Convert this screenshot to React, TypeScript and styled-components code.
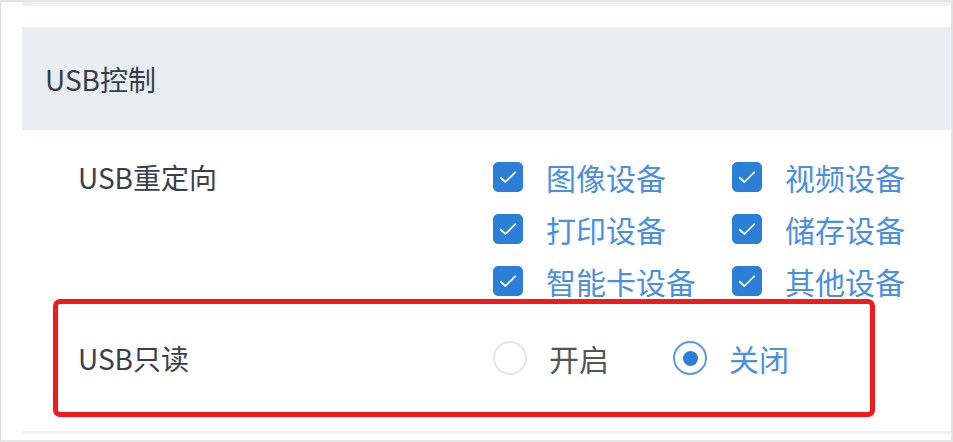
import React, { useState } from "react";
import styled, { createGlobalStyle } from "styled-components";

const GlobalStyle = createGlobalStyle`
  html, body {
    margin: 0;
    padding: 0;
    background: #ffffff;
  }
  body {
    font-family: "Noto Sans CJK SC", "Noto Sans", sans-serif;
  }
`;

const devices = [
  "图像设备",
  "视频设备",
  "打印设备",
  "储存设备",
  "智能卡设备",
  "其他设备",
];

export default function App() {
  const [checked, setChecked] = useState<string[]>(devices);
  const [readOnly, setReadOnly] = useState(false);

  const toggle = (name: string) => {
    setChecked((prev) =>
      prev.includes(name) ? prev.filter((n) => n !== name) : [...prev, name]
    );
  };

  return (
    <>
      <GlobalStyle />
      <Frame>
        <Inner>
          <TopRule />
          <SectionHeader>USB控制</SectionHeader>
          <Row>
            <Label>USB重定向</Label>
            <CheckGrid>
              {devices.map((name) => (
                <CheckItem key={name} onClick={() => toggle(name)}>
                  <CheckBox checked={checked.includes(name)}>
                    <svg width="20" height="20" viewBox="0 0 16 16">
                      <path
                        d="M2.2 8.6 L6 12 L13.8 4.2"
                        fill="none"
                        stroke="#ffffff"
                        strokeWidth="1.4"
                        strokeLinecap="round"
                        strokeLinejoin="round"
                      />
                    </svg>
                  </CheckBox>
                  <CheckText checked={checked.includes(name)}>{name}</CheckText>
                </CheckItem>
              ))}
            </CheckGrid>
          </Row>
          <Highlight>
            <Label>USB只读</Label>
            <RadioGroup>
              <RadioItem onClick={() => setReadOnly(true)}>
                <RadioCircle selected={readOnly} />
                <RadioText selected={readOnly}>开启</RadioText>
              </RadioItem>
              <RadioItem onClick={() => setReadOnly(false)}>
                <RadioCircle selected={!readOnly} />
                <RadioText selected={!readOnly}>关闭</RadioText>
              </RadioItem>
            </RadioGroup>
          </Highlight>
          <BottomRule />
        </Inner>
      </Frame>
    </>
  );
}

const Frame = styled.div`
  width: 953px;
  height: 442px;
  box-sizing: border-box;
  border-top: 2px solid #e4e4e4;
  border-left: 1px solid #dcdcdc;
  border-right: 2px solid #e2e2e2;
  border-bottom: 2px solid #e4e4e4;
  overflow: hidden;
`;

const Inner = styled.div`
  padding-left: 21px;
  display: flex;
  flex-direction: column;
`;

const TopRule = styled.div`
  height: 4px;
  background: #eef1f6;
`;

const SectionHeader = styled.div`
  margin-top: 21px;
  height: 103px;
  background: #e9edf4;
  display: flex;
  align-items: center;
  padding-left: 23px;
  font-size: 28px;
  color: #373d49;
`;

const Row = styled.div`
  display: flex;
  align-items: flex-start;
  padding: 32px 0 0 56px;
`;

const Label = styled.div`
  width: 415px;
  flex-shrink: 0;
  font-size: 28px;
  line-height: 30px;
  color: #3a3f4a;
`;

const CheckGrid = styled.div`
  display: grid;
  grid-template-columns: 239px 200px;
  row-gap: 22px;
`;

const CheckItem = styled.div`
  display: flex;
  align-items: center;
  gap: 23px;
  cursor: pointer;
`;

const CheckBox = styled.span<{ checked: boolean }>`
  width: 30px;
  height: 30px;
  box-sizing: border-box;
  border-radius: 5px;
  display: flex;
  align-items: center;
  justify-content: center;
  background: ${(p) => (p.checked ? "#2c7fd6" : "#ffffff")};
  border: 1px solid ${(p) => (p.checked ? "#2c7fd6" : "#dcdfe6")};

  svg {
    visibility: ${(p) => (p.checked ? "visible" : "hidden")};
  }
`;

const CheckText = styled.span<{ checked: boolean }>`
  font-size: 30px;
  line-height: 30px;
  color: ${(p) => (p.checked ? "#4a8fe2" : "#555555")};
  white-space: nowrap;
`;

const Highlight = styled.div`
  margin: 3px 0 0 31px;
  width: 822px;
  height: 118px;
  box-sizing: border-box;
  border: 5px solid #f21b1b;
  border-radius: 7px;
  display: flex;
  align-items: center;
  padding-left: 20px;
`;

const RadioGroup = styled.div`
  display: flex;
  align-items: center;
  gap: 64px;
`;

const RadioItem = styled.div`
  display: flex;
  align-items: center;
  gap: 22px;
  cursor: pointer;
`;

const RadioCircle = styled.span<{ selected: boolean }>`
  width: 34px;
  height: 34px;
  box-sizing: border-box;
  border-radius: 50%;
  border: 2px solid ${(p) => (p.selected ? "#5a9be3" : "#e3e6eb")};
  display: flex;
  align-items: center;
  justify-content: center;

  &::after {
    content: "";
    width: 15px;
    height: 15px;
    border-radius: 50%;
    background: #2c7fd6;
    display: ${(p) => (p.selected ? "block" : "none")};
  }
`;

const RadioText = styled.span<{ selected: boolean }>`
  font-size: 30px;
  line-height: 30px;
  color: ${(p) => (p.selected ? "#4a8fe2" : "#555555")};
`;

const BottomRule = styled.div`
  margin-top: 14px;
  height: 3px;
  background: #eef1f6;
`;
